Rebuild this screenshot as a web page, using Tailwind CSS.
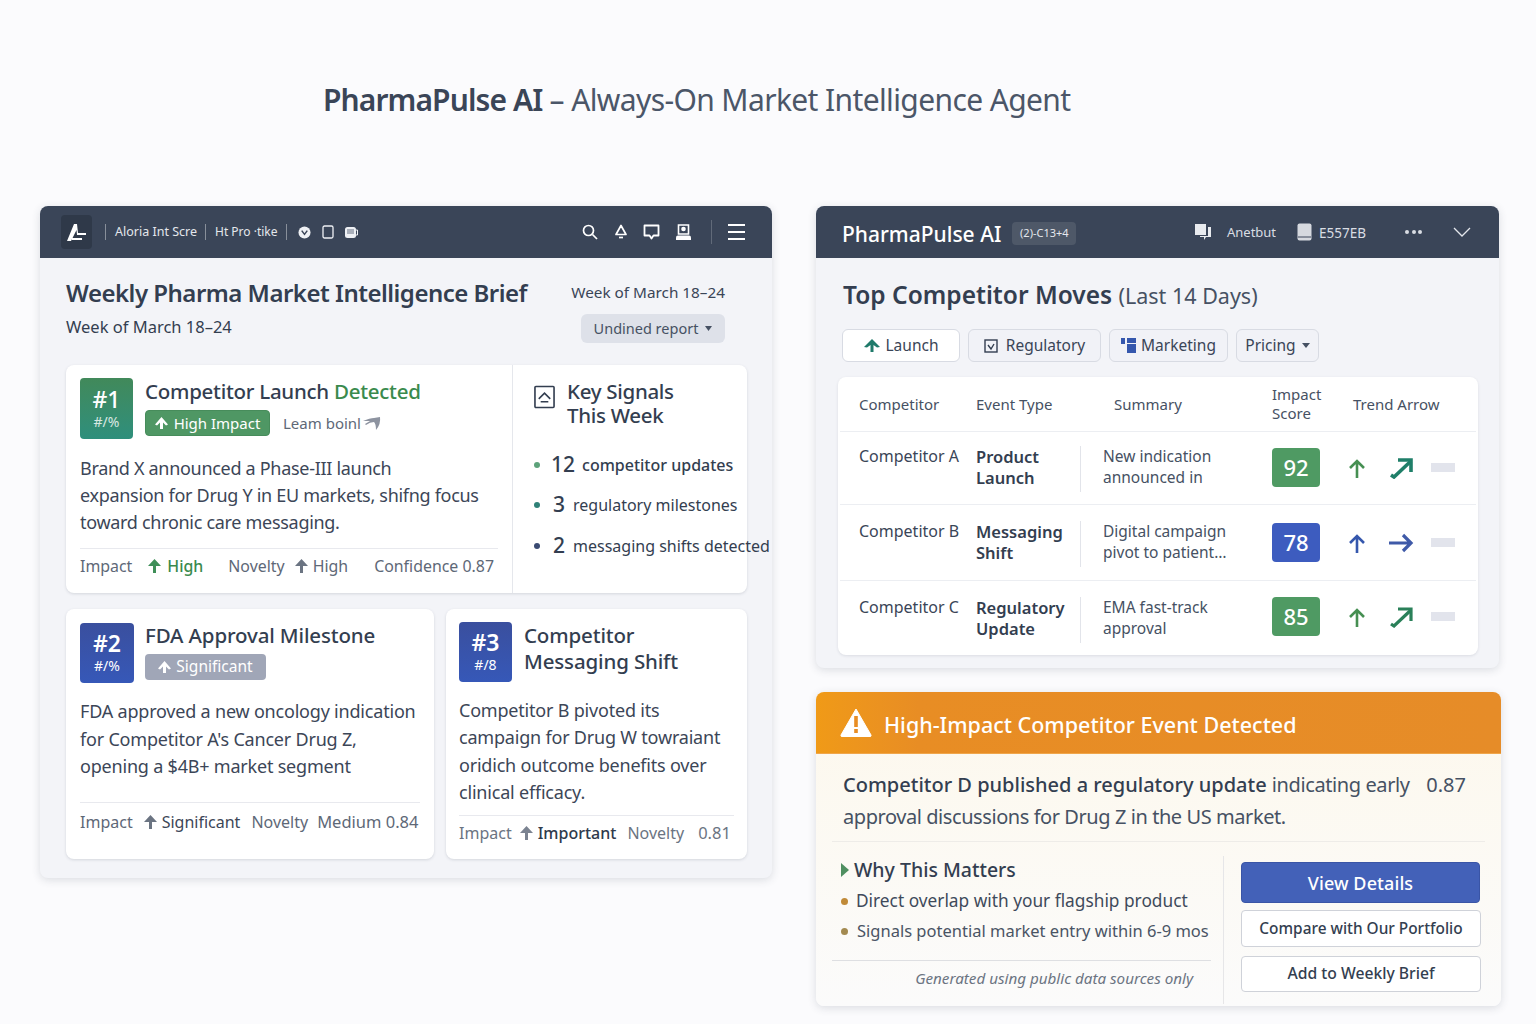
<!DOCTYPE html>
<html lang="en">
<head>
<meta charset="UTF-8" />
<title>PharmaPulse AI</title>
<script src="https://cdn.jsdelivr.net/npm/@tailwindcss/browser@4"></script>
</head>
<body class="bg-[#fbfbfd] h-[1024px] w-[1536px] overflow-hidden font-['Noto_Sans',sans-serif] text-[#2f3a4c]">

  <h1 class="pl-[323px] pt-[79px] h-[206px] text-[30px] leading-[42px] tracking-[-0.62px] font-normal text-[#4b5668]">
    <span class="font-semibold tracking-[-0.9px] text-[#3a4557]">PharmaPulse AI</span> – Always-On Market Intelligence Agent
  </h1>

  <div class="flex items-start pl-[40px] gap-[44px]">

    <!-- left panel -->
    <section class="w-[732px] h-[672px] bg-[#f3f4f8] rounded-lg shadow-[0_2px_8px_rgba(50,60,80,0.16)]">
      <header class="h-[52px] bg-[#3a4558] rounded-t-lg flex items-center pl-[21px] pr-[27px] text-white">
        <div class="w-[31px] h-[34px] bg-[#2f3949] rounded flex items-center justify-center">
          <svg class="w-[22px] h-[20px]" viewBox="0 0 22 20" fill="white"><path d="M1 19 8 2h3l1 9h8v2h-9l-.5-5L5 19z"/><path d="M6 16h10v2H6z"/></svg>
        </div>
        <div class="ml-[13px] h-[16px] border-l border-white/40"></div>
        <span class="ml-[9px] text-[12.5px] text-[#e4e7ec]">Aloria Int Scre</span>
        <div class="ml-[8px] h-[16px] border-l border-white/40"></div>
        <span class="ml-[9px] text-[12px] text-[#e4e7ec]">Ht Pro ·tike</span>
        <div class="ml-[8px] h-[16px] border-l border-white/40"></div>
        <svg class="ml-[11px] w-[13px] h-[13px]" viewBox="0 0 14 14"><circle cx="7" cy="7" r="6.5" fill="#eef0f4"/><path d="M4 5l3 4 3-4" fill="none" stroke="#3a4558" stroke-width="1.6"/></svg>
        <svg class="ml-[11px] w-[12px] h-[14px]" viewBox="0 0 12 14" fill="none" stroke="#eef0f4" stroke-width="1.3"><rect x="1" y="1" width="10" height="12" rx="1.5"/></svg>
        <svg class="ml-[10px] w-[14px] h-[13px]" viewBox="0 0 14 13"><rect x="1" y="1" width="11" height="11" rx="2.500" fill="#eef0f4"/><path d="M12 4h1.500v5H12" fill="none" stroke="#eef0f4"/><rect x="3" y="3" width="7" height="5" fill="#a9afba"/></svg>
        <div class="ml-auto flex items-center">
          <svg class="w-[16px] h-[16px]" viewBox="0 0 16 16" fill="none" stroke="white" stroke-width="1.7"><circle cx="6.500" cy="6.500" r="5"/><path d="m10.500 10.500 4.500 4.500"/></svg>
          <svg class="ml-[15px] w-[16px] h-[16px]" viewBox="0 0 16 16" fill="none" stroke="white" stroke-width="1.700"><path d="M8 1.500 13 10.500H3z" stroke-linejoin="round"/><path d="M6 13.500h4"/></svg>
          <svg class="ml-[14px] w-[17px] h-[17px]" viewBox="0 0 17 17" fill="none" stroke="white" stroke-width="1.800"><path d="M1.500 1.500h14v10h-5l-2 3-2-3h-5z" stroke-linejoin="round"/></svg>
          <svg class="ml-[15px] w-[17px] h-[17px]" viewBox="0 0 17 17"><path d="M3.500 1h10v9h-10z" fill="none" stroke="white" stroke-width="1.600"/><circle cx="8.500" cy="5" r="2.300" fill="white"/><path d="M1 16v-2.500q0-2 2-2h11q2 0 2 2V16z" fill="white"/></svg>
          <div class="ml-[19px] h-[24px] border-l border-white/20"></div>
          <div class="ml-[16px] w-[17px] flex flex-col gap-[5px]">
            <div class="h-[2px] bg-white"></div><div class="h-[2px] bg-white"></div><div class="h-[2px] bg-white"></div>
          </div>
        </div>
      </header>

      <div class="px-[26px]">
        <div class="flex justify-between pt-[19px] pr-[21px] h-[107px]">
          <div>
            <h2 class="text-[24px] leading-[32px] font-semibold text-[#333e50] tracking-[-0.5px]">Weekly Pharma Market Intelligence Brief</h2>
            <p class="mt-[7px] text-[16.500px] leading-[22px] text-[#333e50]">Week of March 18–24</p>
          </div>
          <div class="flex flex-col items-end pt-[4px]">
            <p class="text-[15.300px] leading-[22px] text-[#3a4557]">Week of March 18–24</p>
            <div class="mt-[11px] h-[29px] w-[144px] rounded-md bg-[#dee1e9] flex items-center justify-center gap-[7px] text-[14.500px] text-[#465163]">
              Undined report
              <svg class="w-[7px] h-[5px]" viewBox="0 0 7 5"><path d="M0 0h7L3.500 5z" fill="#465163"/></svg>
            </div>
          </div>
        </div>

        <!-- card 1 -->
        <div class="h-[228px] w-[681px] bg-white rounded-lg shadow-[0_1px_3px_rgba(50,60,80,0.16)] flex">
          <div class="w-[447px] shrink-0 pl-[14px] pr-[14px] pt-[13px] border-r border-[#e5e7ec]">
            <div class="flex gap-[12px]">
              <div class="w-[53px] h-[61px] rounded bg-gradient-to-b from-[#41895a] to-[#2e8f7c] flex flex-col items-center text-white pt-[7px]">
                <span class="text-[23px] leading-[28px] font-medium">#1</span>
                <span class="text-[14px] leading-[17px] opacity-80">#/%</span>
              </div>
              <div>
                <h3 class="text-[20.500px] leading-[28px] font-medium tracking-[-0.27px] text-[#333e50] -mt-[1px]">Competitor Launch <span class="text-[#3a8a4d]">Detected</span></h3>
                <div class="mt-[5px] flex items-center">
                  <span class="h-[26px] w-[125px] rounded bg-[#4f9764] border border-[#478c5b] flex items-center justify-center gap-[6px] text-white text-[15px]">
                    <svg class="w-[13px] h-[12px]" viewBox="0 0 13 12" fill="white"><path d="M6.500 0 13 7.500l-2 1-3-3V12H5V5.500l-3 3-2-1z"/></svg>
                    High Impact
                  </span>
                  <span class="ml-[13px] text-[15px] text-[#5e6877]">Leam boinl</span>
                  <svg class="ml-[1px] w-[19px] h-[16px]" viewBox="0 0 19 16" fill="#8d93a0"><path d="M1 6q7-3 11-3l6-1q1 7-4 13 0-6-2-8-4 0-8 3l-1-1 5-3z"/></svg>
                </div>
              </div>
            </div>
            <p class="mt-[16px] text-[18px] leading-[27px] text-[#3c4657] tracking-[-0.3px] whitespace-nowrap">Brand X announced a Phase-III launch<br>expansion for Drug Y in EU markets, shifng focus<br>toward chronic care messaging.</p>
            <div class="mt-[12px] border-t border-[#e8e9ee] pt-[5px] flex items-center whitespace-nowrap text-[15.900px] leading-[24px] text-[#5e6877]">
              <span>Impact</span>
              <svg class="ml-[16px] w-[13px] h-[14px]" viewBox="0 0 13 14" fill="#3f8f58"><path d="M6.500 0 13 7H8v7H5V7H0z"/></svg>
              <span class="ml-[6px] text-[#3a8a4d] font-medium">High</span>
              <span class="ml-[25px]">Novelty</span>
              <svg class="ml-[10px] w-[13px] h-[14px]" viewBox="0 0 13 14" fill="#6b7482"><path d="M6.500 0 13 7H8v7H5V7H0z"/></svg>
              <span class="ml-[5px]">High</span>
              <span class="ml-[26px]">Confidence 0.87</span>
            </div>
          </div>
          <div class="pl-[21px] pt-[14px] w-[234px]">
            <div class="flex gap-[12px]">
              <svg class="w-[21px] h-[24px] mt-[6px] shrink-0" viewBox="0 0 22 24" fill="none" stroke="#333e50" stroke-width="1.700"><rect x="1" y="1" width="20" height="22" rx="1"/><path d="M5 14l6-6 6 6M7 17h8"/></svg>
              <h3 class="text-[20.500px] leading-[24px] tracking-[-0.3px] font-medium text-[#333e50] w-[130px]">Key Signals This Week</h3>
            </div>
            <ul class="mt-[17px] whitespace-nowrap text-[16px] text-[#333e50]">
              <li class="flex items-center h-[41px]"><span class="shrink-0 w-[6px] h-[6px] rounded-full bg-[#5da27a]"></span><span class="ml-[11px] text-[21px] font-medium">12</span><span class="ml-[7px] font-medium">competitor updates</span></li>
              <li class="flex items-center h-[40px]"><span class="shrink-0 w-[6px] h-[6px] rounded-full bg-[#2f8177]"></span><span class="ml-[13px] text-[21px] font-medium">3</span><span class="ml-[8px]">regulatory milestones</span></li>
              <li class="flex items-center h-[41px]"><span class="shrink-0 w-[6px] h-[6px] rounded-full bg-[#3a4a72]"></span><span class="ml-[13px] text-[21px] font-medium">2</span><span class="ml-[8px]">messaging shifts detected</span></li>
            </ul>
          </div>
        </div>

        <div class="mt-[16px] flex gap-[12px]">
          <!-- card 2 -->
          <div class="shrink-0 w-[368px] h-[250px] bg-white rounded-lg shadow-[0_1px_3px_rgba(50,60,80,0.16)] px-[14px] pt-[14px]">
            <div class="flex gap-[11px]">
              <div class="w-[54px] h-[60px] rounded bg-gradient-to-b from-[#3a4f9e] to-[#3658b8] flex flex-col items-center text-white pt-[6px]">
                <span class="text-[23px] leading-[28px] font-semibold">#2</span>
                <span class="text-[14px] leading-[17px]">#/%</span>
              </div>
              <div>
                <h3 class="text-[20.500px] leading-[28px] font-medium tracking-[-0.15px] text-[#333e50] -mt-[2px]">FDA Approval Milestone</h3>
                <span class="mt-[5px] h-[26px] w-[121px] rounded bg-[#a0a6b7] flex items-center justify-center gap-[5px] text-white text-[15.500px]">
                  <svg class="w-[13px] h-[12px]" viewBox="0 0 13 12" fill="white"><path d="M6.500 0 13 7.500l-2 1-3-3V12H5V5.500l-3 3-2-1z"/></svg>
                  Significant
                </span>
              </div>
            </div>
            <p class="mt-[15px] text-[18px] leading-[27.500px] text-[#3c4657] tracking-[-0.2px]">FDA approved a new oncology indication for Competitor A's Cancer Drug Z, opening a $4B+ market segment</p>
            <div class="mt-[21px] border-t border-[#e8e9ee] pt-[7px] flex items-center text-[16px] leading-[24px] text-[#5e6877] whitespace-nowrap">
              <span>Impact</span>
              <svg class="ml-[11px] w-[13px] h-[14px]" viewBox="0 0 13 14" fill="#6b7482"><path d="M6.500 0 13 7H8v7H5V7H0z"/></svg>
              <span class="ml-[5px] text-[#3c4657]">Significant</span>
              <span class="ml-[11px]">Novelty</span>
              <span class="ml-[9px] text-[16.500px]">Medium 0.84</span>
            </div>
          </div>
          <!-- card 3 -->
          <div class="shrink-0 w-[301px] h-[250px] bg-white rounded-lg shadow-[0_1px_3px_rgba(50,60,80,0.16)] px-[13px] pt-[13px]">
            <div class="flex gap-[12px]">
              <div class="w-[53px] h-[60px] rounded bg-gradient-to-b from-[#3a4f9e] to-[#3658b8] flex flex-col items-center text-white pt-[6px]">
                <span class="text-[23px] leading-[28px] font-semibold">#3</span>
                <span class="text-[14px] leading-[17px]">#/8</span>
              </div>
              <h3 class="text-[20.500px] leading-[26px] font-medium tracking-[-0.15px] text-[#333e50] w-[170px]">Competitor Messaging Shift</h3>
            </div>
            <p class="mt-[15px] text-[18px] leading-[27.300px] text-[#3c4657] tracking-[-0.2px]">Competitor B pivoted its campaign for Drug W towraiant oridich outcome benefits over clinical efficacy.</p>
            <div class="mt-[9px] border-t border-[#e8e9ee] pt-[5px] flex items-center text-[16px] leading-[24px] text-[#6b7482] whitespace-nowrap">
              <span>Impact</span>
              <svg class="ml-[8px] w-[13px] h-[14px]" viewBox="0 0 13 14" fill="#7b8391"><path d="M6.500 0 13 7H8v7H5V7H0z"/></svg>
              <span class="ml-[5px] text-[#2f3a4c] font-medium">Important</span>
              <span class="ml-[11px]">Novelty</span>
              <span class="ml-[14px] text-[16.500px]">0.81</span>
            </div>
          </div>
        </div>
      </div>
    </section>

    <div class="w-[685px] flex flex-col gap-[24px]">
      <!-- right panel -->
      <section class="w-[683px] h-[462px] bg-[#f3f4f8] rounded-lg shadow-[0_2px_8px_rgba(50,60,80,0.16)]">
        <header class="h-[52px] bg-[#3a4558] rounded-t-lg flex items-center pl-[26px] pr-[28px] text-white">
          <span class="text-[21px] font-medium pt-[5px]">PharmaPulse AI</span>
          <span class="ml-[11px] mt-[3px] h-[23px] w-[64px] rounded-sm bg-[#4e5868] flex items-center justify-center text-[11px] text-[#e4e7ec]">(2)-C13+4</span>
          <svg class="ml-auto w-[18px] h-[18px]" viewBox="0 0 18 18"><path d="M1 1h11v11H1z" fill="#e8eaee"/><path d="M14 4h3v10h-5l-2 3v-3H6v-1h8z" fill="#e8eaee"/></svg>
          <span class="ml-[15px] pt-[2px] text-[13px] text-[#d9dde3]">Anetbut</span>
          <svg class="ml-[21px] w-[15px] h-[18px]" viewBox="0 0 15 18"><rect x="0.500" y="0.500" width="14" height="17" rx="2" fill="#d6d9df"/><path d="M1 14h13" stroke="#3a4558"/></svg>
          <span class="ml-[7px] pt-[2px] text-[13.500px] text-[#d9dde3]">E557EB</span>
          <span class="ml-[39px] flex gap-[2.500px]"><i class="w-[4px] h-[4px] rounded-full bg-[#d9dde3]"></i><i class="w-[4px] h-[4px] rounded-full bg-[#d9dde3]"></i><i class="w-[4px] h-[4px] rounded-full bg-[#d9dde3]"></i></span>
          <svg class="ml-[31px] w-[18px] h-[10px]" viewBox="0 0 18 10" fill="none" stroke="#e4e7ec" stroke-width="1.300"><path d="M1 1l8 8 8-8"/></svg>
        </header>
        <div class="px-[22px]">
          <h2 class="pl-[5px] pt-[20px] text-[24.500px] leading-[34px] font-semibold text-[#333e50]">Top Competitor Moves <span class="font-normal text-[21.500px] text-[#465163]">(Last 14 Days)</span></h2>
          <div class="pl-[4px] mt-[16px] flex gap-[8px] text-[15.500px] text-[#3a4557]">
            <span class="h-[33px] w-[118px] rounded-md bg-white border border-[#d8dbe3] flex items-center justify-center gap-[6px]">
              <svg class="w-[16px] h-[13px]" viewBox="0 0 16 13" fill="#1f7a6a"><path d="M8 0l8 8-3 .5L9.500 6v7h-3V6L3 8.500 0 8z"/></svg>Launch
            </span>
            <span class="h-[33px] w-[133px] rounded-md bg-[#f1f2f7] border border-[#d8dbe3] flex items-center justify-center gap-[8px]">
              <svg class="w-[14px] h-[14px]" viewBox="0 0 14 14" fill="none" stroke="#333e50" stroke-width="1.400"><rect x="1" y="1" width="12" height="12"/><path d="M4 6l3 4 3-5"/></svg>Regulatory
            </span>
            <span class="h-[33px] w-[119px] rounded-md bg-[#f1f2f7] border border-[#d8dbe3] flex items-center justify-center gap-[5px]">
              <svg class="w-[15px] h-[15px]" viewBox="0 0 15 15" fill="#3557ad"><rect width="4" height="6"/><rect x="6" width="9" height="5"/><rect x="6" y="6" width="9" height="9"/></svg>Marketing
            </span>
            <span class="h-[33px] w-[83px] rounded-md bg-[#f1f2f7] border border-[#d8dbe3] flex items-center justify-center gap-[6px]">
              Pricing<svg class="w-[8px] h-[5px]" viewBox="0 0 8 5"><path d="M0 0h8L4 5z" fill="#465163"/></svg>
            </span>
          </div>

          <div class="mt-[15px] w-[640px] h-[278px] bg-white rounded-lg shadow-[0_1px_3px_rgba(50,60,80,0.12)] text-[15.500px]">
            <div class="h-[55px] mx-[2px] border-b border-[#eceef2] grid grid-cols-[117px_138px_158px_81px_1fr] pl-[19px] items-center text-[#465163] leading-[19px] text-[15px]">
              <span>Competitor</span><span>Event Type</span><span>Summary</span><span>Impact<br>Score</span><span>Trend Arrow</span>
            </div>
            <div class="h-[73px] mx-[2px] border-b border-[#eceef2] grid grid-cols-[117px_104px_192px_76px_1fr] pl-[19px] pt-[16px] leading-[21px]">
              <span class="-mt-[2px] text-[16px] text-[#3a4557]">Competitor A</span>
              <span class="-mt-[2px] font-semibold text-[16.500px] text-[#333e50]">Product Launch</span>
              <span class="-mt-[2px] border-l border-[#e2e4ea] pl-[22px] h-[46px] text-[#465163]">New indication<br>announced in</span>
              <span class="w-[48px] h-[39px] rounded bg-[#4f9a63] text-white text-[22px] font-medium flex items-center justify-center">92</span>
              <span class="flex items-center h-[39px]">
                <svg class="w-[18px] h-[20px]" viewBox="0 0 18 20" fill="none" stroke="#468f52" stroke-width="2.600"><path d="M9 20V3M2 10l7-7 7 7"/></svg>
                <svg class="ml-[22px] w-[26px] h-[22px]" viewBox="0 0 26 22" fill="none" stroke="#1f7f69" stroke-width="3.600"><path d="M3 18l3 2L23 4"/><path d="M10 3h13v12"/></svg>
                <i class="ml-[17px] w-[24px] h-[9px] bg-[#e2e4ec]"></i>
              </span>
            </div>
            <div class="h-[76px] mx-[2px] border-b border-[#eceef2] grid grid-cols-[117px_104px_192px_76px_1fr] pl-[19px] pt-[16px] leading-[21px]">
              <span class="text-[16px] text-[#3a4557]">Competitor B</span>
              <span class="font-semibold text-[16.500px] text-[#333e50]">Messaging Shift</span>
              <span class="border-l border-[#e2e4ea] pl-[22px] h-[46px] text-[#465163]">Digital campaign<br>pivot to patient…</span>
              <span class="mt-[2px] w-[48px] h-[39px] rounded bg-[#3d5cbf] text-white text-[22px] font-medium flex items-center justify-center">78</span>
              <span class="mt-[2px] flex items-center h-[39px]">
                <svg class="w-[18px] h-[20px]" viewBox="0 0 18 20" fill="none" stroke="#3557ad" stroke-width="2.600"><path d="M9 20V3M2 10l7-7 7 7"/></svg>
                <svg class="ml-[22px] w-[26px] h-[20px]" viewBox="0 0 26 20" fill="none" stroke="#3f5aa8" stroke-width="3.200"><path d="M1 10h23M15 2l8 8-8 8"/></svg>
                <i class="ml-[17px] w-[24px] h-[9px] bg-[#e2e4ec]"></i>
              </span>
            </div>
            <div class="h-[74px] mx-[2px] grid grid-cols-[117px_104px_192px_76px_1fr] pl-[19px] pt-[16px] leading-[21px]">
              <span class="text-[16px] text-[#3a4557]">Competitor C</span>
              <span class="font-semibold text-[16.500px] text-[#333e50]">Regulatory Update</span>
              <span class="border-l border-[#e2e4ea] pl-[22px] h-[46px] text-[#465163]">EMA fast-track<br>approval</span>
              <span class="w-[48px] h-[39px] rounded bg-[#4f9a63] text-white text-[22px] font-medium flex items-center justify-center">85</span>
              <span class="flex items-center h-[39px]">
                <svg class="w-[18px] h-[20px]" viewBox="0 0 18 20" fill="none" stroke="#468f52" stroke-width="2.600"><path d="M9 20V3M2 10l7-7 7 7"/></svg>
                <svg class="ml-[22px] w-[26px] h-[22px]" viewBox="0 0 26 22" fill="none" stroke="#2a8059" stroke-width="3.200"><path d="M3 18l3 2L23 4"/><path d="M10 3h13v12"/></svg>
                <i class="ml-[17px] w-[24px] h-[9px] bg-[#e2e4ec]"></i>
              </span>
            </div>
          </div>
        </div>
      </section>

      <!-- alert -->
      <section class="h-[314px] w-[685px] rounded-lg bg-gradient-to-b from-[#fdf8ec] to-[#fbfbfb] shadow-[0_2px_8px_rgba(50,60,80,0.16)]">
        <header class="h-[62px] rounded-t-lg bg-gradient-to-r from-[#f09a17] via-[#e88d24] via-15% to-[#e68c28] border-b border-[#f0a64a] flex items-center pl-[24px] text-white">
          <svg class="w-[32px] h-[29px]" viewBox="0 0 32 29"><path d="M16 1 31 27q.5 1.500-1 1.500H2Q.5 28.500 1 27z" fill="white" stroke="white" stroke-linejoin="round"/><rect x="14.200" y="8" width="3.600" height="11" fill="#e88d24"/><rect x="14.200" y="21" width="3.600" height="4" fill="#e88d24"/></svg>
          <h3 class="ml-[12px] pt-[5px] text-[21.500px] font-medium">High-Impact Competitor Event Detected</h3>
        </header>
        <div class="mx-[16px] h-[88px] border-b border-[#eeece8] pl-[11px] pr-[19px] pt-[15px] text-[20px] leading-[32px] text-[#465163]">
          <div class="flex justify-between">
            <p><span class="font-medium text-[#333e50]">Competitor D published a regulatory update</span> <span class="tracking-[-0.4px]">indicating early</span></p>
            <span class="text-[#465163]">0.87</span>
          </div>
          <p class="tracking-[-0.43px]">approval discussions for Drug Z in the US market.</p>
        </div>
        <div class="flex pl-[16px]">
          <div class="w-[392px] border-r border-[#e6e6e8] h-[148px] mt-[14px]">
            <div class="w-[379px] h-[105px] border-b border-[#dedfe2]">
              <div class="flex items-center h-[28px]">
                <svg class="ml-[9px] w-[8px] h-[14px]" viewBox="0 0 8 14"><path d="M0 0l8 7-8 7z" fill="#4f8f60"/></svg>
                <span class="ml-[5px] text-[19.500px] font-medium text-[#333e50]">Why This Matters</span>
              </div>
              <div class="flex items-center h-[30px] mt-[2px] text-[17.300px] text-[#3f4a5b] whitespace-nowrap"><i class="ml-[9px] w-[7px] h-[7px] rounded-full bg-[#c08a38]"></i><span class="ml-[8px]">Direct overlap with your flagship product</span></div>
              <div class="flex items-center h-[30px] text-[16.500px] text-[#4a5464] whitespace-nowrap"><i class="ml-[9px] w-[7px] h-[7px] rounded-full bg-[#a38a50]"></i><span class="ml-[9px]">Signals potential market entry within 6-9 mos</span></div>
            </div>
            <p class="text-right w-[379px] pr-[18px] pt-[6px] text-[15.200px] italic text-[#6b7482]">Generated using public data sources only</p>
          </div>
          <div class="ml-[17px] mt-[20px] w-[240px] flex flex-col">
            <button class="h-[41px] w-[239px] pt-[2px] rounded bg-[#4361b8] border border-[#3a55a6] text-white text-[18px] tracking-[0.1px] font-medium">View Details</button>
            <button class="mt-[7px] h-[37px] rounded bg-white border border-[#cfd2d9] text-[15.400px] font-medium text-[#333e50]">Compare with Our Portfolio</button>
            <button class="mt-[9px] h-[36px] rounded bg-white border border-[#cfd2d9] text-[15.700px] font-medium text-[#333e50]">Add to Weekly Brief</button>
          </div>
        </div>
      </section>
    </div>
  </div>
</body>
</html>
